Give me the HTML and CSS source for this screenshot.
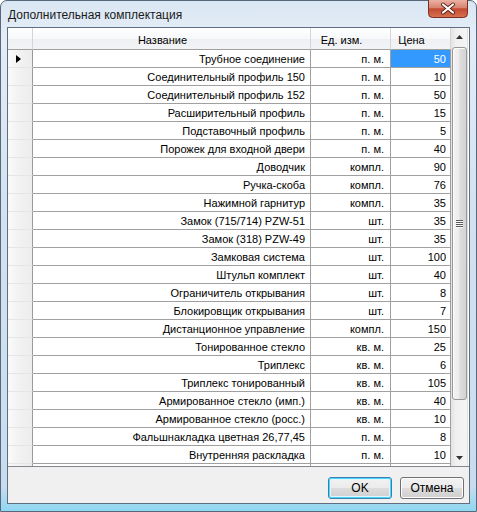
FILE: index.html
```html
<!DOCTYPE html>
<html>
<head>
<meta charset="utf-8">
<link rel="stylesheet" href="styles.css">
</head>
<body>
<div class="window">
  <div class="titlebar">
    <span class="title">Дополнительная комплектация</span>
    <div class="close">
      <svg width="40" height="18" viewBox="0 0 40 18">
        <defs>
          <linearGradient id="cg" x1="0" y1="0" x2="0" y2="1">
            <stop offset="0" stop-color="#eab2a5"/>
            <stop offset="0.45" stop-color="#d9826f"/>
            <stop offset="0.5" stop-color="#c24a30"/>
            <stop offset="1" stop-color="#d8714f"/>
          </linearGradient>
        </defs>
        <path d="M0.5 0 V13.5 Q0.5 17.5 4.5 17.5 H35.5 Q39.5 17.5 39.5 13.5 V0" fill="url(#cg)" stroke="#7b2f22"/>
        <path d="M15 4.5 L25 12.5 M25 4.5 L15 12.5" stroke="#5a2118" stroke-width="4" stroke-linecap="round"/>
        <path d="M15 4.5 L25 12.5 M25 4.5 L15 12.5" stroke="#ffffff" stroke-width="2.2" stroke-linecap="round"/>
      </svg>
    </div>
  </div>
  <div class="client">
    <div class="grid">
      <div class="table">
        <div class="row hdr">
          <div class="rh"></div>
          <div class="ch">Название</div>
          <div class="ch">Ед. изм.</div>
          <div class="ch">Цена</div>
        </div>
        <div class="row"><div class="rh"><span class="cur"></span></div><div class="c name">Трубное соединение</div><div class="c unit">п. м.</div><div class="c price sel">50</div></div>
        <div class="row"><div class="rh"></div><div class="c name">Соединительный профиль 150</div><div class="c unit">п. м.</div><div class="c price">10</div></div>
        <div class="row"><div class="rh"></div><div class="c name">Соединительный профиль 152</div><div class="c unit">п. м.</div><div class="c price">50</div></div>
        <div class="row"><div class="rh"></div><div class="c name">Расширительный профиль</div><div class="c unit">п. м.</div><div class="c price">15</div></div>
        <div class="row"><div class="rh"></div><div class="c name">Подставочный профиль</div><div class="c unit">п. м.</div><div class="c price">5</div></div>
        <div class="row"><div class="rh"></div><div class="c name">Порожек для входной двери</div><div class="c unit">п. м.</div><div class="c price">40</div></div>
        <div class="row"><div class="rh"></div><div class="c name">Доводчик</div><div class="c unit">компл.</div><div class="c price">90</div></div>
        <div class="row"><div class="rh"></div><div class="c name">Ручка-скоба</div><div class="c unit">компл.</div><div class="c price">76</div></div>
        <div class="row"><div class="rh"></div><div class="c name">Нажимной гарнитур</div><div class="c unit">компл.</div><div class="c price">35</div></div>
        <div class="row"><div class="rh"></div><div class="c name">Замок (715/714) PZW-51</div><div class="c unit">шт.</div><div class="c price">35</div></div>
        <div class="row"><div class="rh"></div><div class="c name">Замок (318) PZW-49</div><div class="c unit">шт.</div><div class="c price">35</div></div>
        <div class="row"><div class="rh"></div><div class="c name">Замковая система</div><div class="c unit">шт.</div><div class="c price">100</div></div>
        <div class="row"><div class="rh"></div><div class="c name">Штульп комплект</div><div class="c unit">шт.</div><div class="c price">40</div></div>
        <div class="row"><div class="rh"></div><div class="c name">Ограничитель открывания</div><div class="c unit">шт.</div><div class="c price">8</div></div>
        <div class="row"><div class="rh"></div><div class="c name">Блокировщик открывания</div><div class="c unit">шт.</div><div class="c price">7</div></div>
        <div class="row"><div class="rh"></div><div class="c name">Дистанционное управление</div><div class="c unit">компл.</div><div class="c price">150</div></div>
        <div class="row"><div class="rh"></div><div class="c name">Тонированное стекло</div><div class="c unit">кв. м.</div><div class="c price">25</div></div>
        <div class="row"><div class="rh"></div><div class="c name">Триплекс</div><div class="c unit">кв. м.</div><div class="c price">6</div></div>
        <div class="row"><div class="rh"></div><div class="c name">Триплекс тонированный</div><div class="c unit">кв. м.</div><div class="c price">105</div></div>
        <div class="row"><div class="rh"></div><div class="c name">Армированное стекло (имп.)</div><div class="c unit">кв. м.</div><div class="c price">40</div></div>
        <div class="row"><div class="rh"></div><div class="c name">Армированное стекло (росс.)</div><div class="c unit">кв. м.</div><div class="c price">10</div></div>
        <div class="row"><div class="rh"></div><div class="c name">Фальшнакладка цветная 26,77,45</div><div class="c unit">п. м.</div><div class="c price">8</div></div>
        <div class="row"><div class="rh"></div><div class="c name">Внутренняя раскладка</div><div class="c unit">п. м.</div><div class="c price">10</div></div>
        <div class="row"><div class="rh"></div><div class="c name"></div><div class="c unit"></div><div class="c price"></div></div>
      </div>
      <div class="vscroll">
        <div class="sbtn"><svg width="7" height="4" viewBox="0 0 7 4"><path d="M0 4 L3.5 0 L7 4 Z" fill="#333"/></svg></div>
        <div class="track">
          <div class="thumb">
            <div class="grip"><i></i><i></i><i></i><i></i></div>
          </div>
        </div>
        <div class="sbtn"><svg width="7" height="4" viewBox="0 0 7 4"><path d="M0 0 L3.5 4 L7 0 Z" fill="#333"/></svg></div>
      </div>
    </div>
    <div class="footer">
      <button class="btn default">OK</button>
      <button class="btn">Отмена</button>
    </div>
  </div>
</div>
</body>
</html>
```

FILE: styles.css
```css
* { box-sizing: border-box; }
html, body { margin: 0; padding: 0; }
body { width: 477px; height: 512px; overflow: hidden; background: #fff; }

.window {
  width: 477px;
  height: 512px;
  border: 1px solid #58687a;
  border-radius: 7px 7px 0 0;
  background: linear-gradient(180deg, #d9e6f3 0%, #e4edf7 6%, #d3e2f1 40%, #c9dcef 95%, #8fd7f2 100%);
  display: flex;
  flex-direction: column;
  padding: 0 6px 7px 6px;
}

.titlebar {
  height: 26px;
  display: flex;
  align-items: flex-start;
  flex: none;
}
.title {
  font-family: "Liberation Sans", Arial, sans-serif;
  font-size: 12px;
  color: #1a1a1a;
  margin-top: 7px;
  margin-left: 1px;
}
.close {
  margin-left: auto;
  margin-right: 2px;
  margin-top: -1px;
  width: 40px;
  height: 18px;
}
.close svg { display: block; }

.client {
  flex: 1;
  border: 1px solid #5f6f80;
  background: #f0f0f0;
  display: flex;
  flex-direction: column;
}

.grid {
  height: 439px;
  flex: none;
  display: flex;
  background: #fff;
  border-bottom: 1px solid #828790;
}

.table {
  width: 443px;
  height: 438px;
  overflow: hidden;
  flex: none;
  font-family: "Liberation Sans", Arial, sans-serif;
  font-size: 11px;
  color: #000;
}

.row {
  display: grid;
  grid-template-columns: 25px 278px 80px 60px;
  height: 18px;
}
.row > div {
  border-right: 1px solid #a0a0a0;
  border-bottom: 1px solid #a0a0a0;
  display: flex;
  align-items: center;
  white-space: nowrap;
  overflow: hidden;
}

.rh {
  background: linear-gradient(90deg, #fbfbfb 0%, #f3f3f3 40%, #ececec 100%);
  border-bottom-color: #e6e6e6 !important;
  border-right-color: #9a9a9a !important;
  padding-left: 8px;
}
.cur {
  width: 0; height: 0;
  border-top: 4px solid transparent;
  border-bottom: 4px solid transparent;
  border-left: 5px solid #000;
}

.hdr { height: 22px; }
.hdr > div {
  background: linear-gradient(180deg, #ffffff 0%, #f7f8fa 50%, #eef0f3 51%, #f2f3f5 100%);
  border-right-color: #d5d5d5;
  border-bottom-color: #a0a0a0;
}
.hdr .rh { border-bottom-color: #a0a0a0 !important; border-right-color: #d5d5d5 !important; background: linear-gradient(180deg, #ffffff 0%, #f7f8fa 50%, #eef0f3 51%, #f2f3f5 100%); }
.ch {
  justify-content: center;
  padding-right: 18px;
  padding-top: 2px;
}

.c { justify-content: flex-end; }
.name { padding-right: 5px; }
.unit { padding-right: 6px; }
.price { padding-right: 4px; }
.sel { background: #3399ff; color: #fff; }

.vscroll {
  width: 17px;
  height: 438px;
  flex: none;
  display: flex;
  flex-direction: column;
  background: linear-gradient(90deg, #e3e3e3 0%, #f0f0f0 30%, #f5f5f5 100%);
  border-right: 1px solid #e0e0e0;
}
.sbtn {
  height: 17px;
  flex: none;
  display: flex;
  align-items: center;
  justify-content: center;
}
.sbtn svg { display: block; }
.track {
  flex: 1;
  padding: 2px 0 49px 0;
  display: flex;
}
.thumb {
  flex: 1;
  margin: 0 0 0 1px;
  border: 1px solid #979797;
  border-radius: 3px;
  background: linear-gradient(90deg, #f4f4f4 0%, #ececec 45%, #dcdcdc 55%, #d4d4d4 100%);
  box-shadow: inset 1px 1px 0 #fdfdfd;
  display: flex;
  align-items: center;
  justify-content: center;
}
.grip { display: flex; flex-direction: column; gap: 1px; }
.grip i {
  display: block;
  width: 7px;
  height: 1px;
  background: #5a5a5a;
  box-shadow: 0 1px 0 #fafafa;
}

.footer {
  flex: 1;
  display: flex;
  justify-content: flex-end;
  align-items: flex-start;
  gap: 8px;
  padding: 10px 5px 0 0;
}
.btn {
  width: 64px;
  height: 22px;
  font-family: "Liberation Sans", Arial, sans-serif;
  font-size: 12px;
  color: #000;
  border: 1px solid #707070;
  border-radius: 3px;
  background: linear-gradient(180deg, #f2f2f2 0%, #ebebeb 50%, #dddddd 51%, #cfcfcf 100%);
  box-shadow: inset 0 0 0 1px #fcfcfc;
  padding: 0;
}
.btn.default {
  border-color: #3c7fb1;
  box-shadow: inset 0 0 0 1px #48d8fb, inset 0 0 0 2px #e4f4fb;
  background: linear-gradient(180deg, #f2f2f2 0%, #ebebeb 50%, #dddddd 51%, #cfcfcf 100%);
}
```
